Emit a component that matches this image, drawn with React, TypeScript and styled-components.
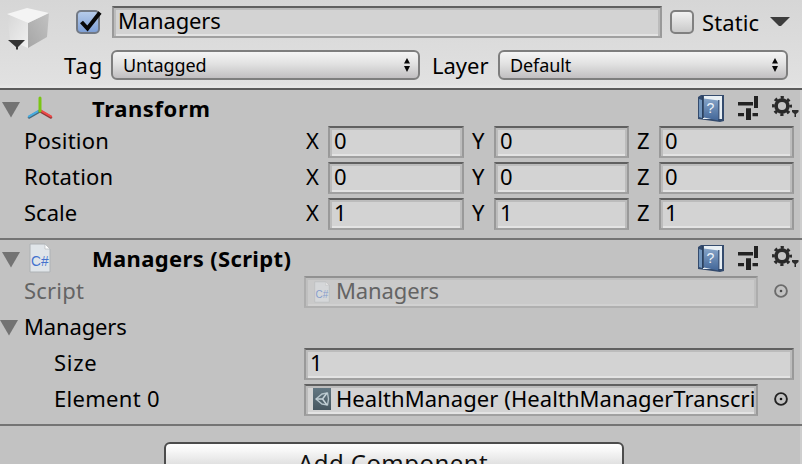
import React from 'react';
import styled, { createGlobalStyle } from 'styled-components';

const GlobalStyle = createGlobalStyle`
  *, *::before, *::after { box-sizing: border-box; }
  html, body { margin: 0; height: 464px; overflow: hidden; }
  svg { display: block; flex: none; }
`;

const Inspector = styled.div`
  width: 802px;
  height: 464px;
  overflow: hidden;
  background: #c2c2c2;
  box-shadow: inset -2px 0 #cecece;
  color: #000;
  font-family: 'Noto Sans', 'Open Sans', sans-serif;
  font-size: 22px;
  line-height: 30px;
  white-space: nowrap;
`;

const ObjectHeader = styled.header`
  display: flex;
  height: 90px;
  background: linear-gradient(#d6d6d6, #e1e1e1 84px, #e6e6e6 87px);
  border-bottom: 2px solid #5b5b5b;
`;

const CubeCell = styled.div`
  width: 64px;
  padding: 6px 0 0 5px;
`;

const HeaderLines = styled.div`
  flex: 1;
  min-width: 0;
`;

const NameLine = styled.div`
  display: flex;
  align-items: center;
  height: 32px;
  margin-top: 6px;
  padding-left: 12px;
`;

const PopupLine = styled.div`
  display: flex;
  height: 30px;
  margin-top: 12px;
`;

const Toggle = styled.span<{ $on?: boolean }>`
  flex: none;
  width: 24px;
  height: 24px;
  border: 2px solid ${(p) => (p.$on ? '#737a85' : '#808080')};
  border-radius: 5px;
  background: ${(p) => (p.$on ? 'linear-gradient(#b5cbea, #7fa0d6)' : 'linear-gradient(#f2f2f2, #c9c9c9)')};
  svg { margin: -2px 0 0 1px; overflow: visible; }
`;

const Text = styled.span<{ $w?: number; $ls?: number; $ml?: number; $dim?: boolean }>`
  flex: none;
  width: ${(p) => (p.$w ? `${p.$w}px` : 'auto')};
  height: 30px;
  margin-left: ${(p) => p.$ml ?? 0}px;
  letter-spacing: ${(p) => p.$ls ?? 0}px;
  color: ${(p) => (p.$dim ? '#646464' : '#000')};
`;

const Title = styled(Text).attrs({ as: 'h2' })`
  flex: 1;
  margin-top: 0;
  margin-bottom: 0;
  font-size: 22px;
  font-weight: 700;
`;

const Field = styled.div<{ $w: number; $ml?: number; $dim?: boolean }>`
  display: flex;
  flex: none;
  width: ${(p) => p.$w}px;
  height: 32px;
  margin-left: ${(p) => p.$ml ?? 0}px;
  padding: 0 2px 0 4px;
  overflow: hidden;
  border: 2px solid;
  border-color: ${(p) => (p.$dim ? '#919191 #adadad #b0b0b0' : '#606060 #999 #a0a0a0')};
  background: ${(p) => (p.$dim ? '#cacaca' : '#d3d3d3')};
  box-shadow: ${(p) =>
    p.$dim
      ? 'inset 2px 2px #bfbfbf, inset -2px 0 #bfbfbf, inset 0 -2px #d1d1d1'
      : 'inset 2px 2px #bcbcbc, inset -2px 0 #bcbcbc, inset 0 -2px #e3e3e3'};
  line-height: 25px;
`;

const Clip = styled.span`
  flex: 1;
  min-width: 0;
  overflow: hidden;
  letter-spacing: 0.07px;
`;

const Popup = styled.div<{ $w: number; $ml: number }>`
  display: flex;
  align-items: center;
  justify-content: space-between;
  flex: none;
  width: ${(p) => p.$w}px;
  height: 30px;
  margin-left: ${(p) => p.$ml}px;
  padding: 0 8px 0 10px;
  border: 2px solid #7e7e7e;
  border-radius: 6px;
  background: linear-gradient(#f5f5f5, #e2e2e2 45%, #c1bfc1);
  font-size: 18px;
  letter-spacing: -0.1px;
`;

const Component = styled.section<{ $h: number }>`
  height: ${(p) => p.$h}px;
  border-bottom: 2px solid #747474;
`;

const TitleRow = styled.div`
  display: flex;
  height: 36px;
  padding-right: 3px;
  padding-top: 3px;
`;

const Row = styled.div<{ $indent?: number }>`
  display: flex;
  height: 36px;
  padding-left: ${(p) => p.$indent ?? 24}px;
  line-height: 29px;
`;

const Slot = styled.span<{ $w: number; $t?: number; $l?: number }>`
  flex: none;
  width: ${(p) => p.$w}px;
  padding: ${(p) => p.$t ?? 0}px 0 0 ${(p) => p.$l ?? 0}px;
`;

const AddButton = styled.button`
  display: block;
  width: 460px;
  height: 46px;
  margin: 16px 0 0 164px;
  padding: 0;
  border: 2px solid #4c4c4c;
  border-radius: 6px;
  background: linear-gradient(#fff, #f8f8f8 6px, #d4d4d4 28px, #c4c4c4);
  color: #111;
  font: 24px/32px 'Noto Sans', 'Open Sans', sans-serif;
  letter-spacing: 0.45px;
  span { display: block; margin: -5px 2px 0 0; }
`;

const Foldout = () => (
  <svg width="18" height="16" viewBox="0 0 18 16"><path d="M0 0H18L9 15.5Z" fill="#737373" /></svg>
);

const DownMark = () => (
  <svg width="20" height="10" viewBox="0 0 20 10"><path d="M0 0H20L11 9H9Z" fill="#3d3d3d" /></svg>
);

const Arrows = () => (
  <svg width="6" height="14" viewBox="0 0 6 14"><path d="M3 0L6 5.6H0ZM0 8H6L3 14Z" fill="#080808" /></svg>
);

const CubeIcon = () => (
  <svg width="46" height="46" viewBox="0 0 46 46">
    <defs>
      <linearGradient id="cubeLeft" x1="0" y1="0" x2="1" y2="1">
        <stop stopColor="#d6d6d6" /><stop offset="1" stopColor="#f1f1f1" />
      </linearGradient>
      <linearGradient id="cubeRight" x1="1" y1="0" x2="0" y2="1">
        <stop stopColor="#c2c2c2" /><stop offset="1" stopColor="#a6a6a6" />
      </linearGradient>
    </defs>
    <path d="M2 8L23 17V42L5 34Z" fill="url(#cubeLeft)" />
    <path d="M44 7L23 17V42L42 31Z" fill="url(#cubeRight)" />
    <path d="M2 8L22 2L44 7L23 17Z" fill="#f4f4f4" />
    <path d="M3 34H20L13 41V43.5H11V41Z" fill="#333" />
  </svg>
);

const AxesIcon = () => (
  <svg width="28" height="26" viewBox="0 0 28 26" fill="none" strokeLinecap="round" strokeWidth="3">
    <path d="M14 16L3.2 22.2" stroke="#47697b" /><path d="M13.5 15.4L3 21.4" stroke="#46ace0" strokeWidth="2" />
    <path d="M14 16L24.8 22.2" stroke="#903838" /><path d="M14.5 15.4L25 21.4" stroke="#ef4949" strokeWidth="2" />
    <path d="M14 16V3" stroke="#7ac514" />
  </svg>
);

const ScriptIcon = ({ small }: { small?: boolean }) => (
  <svg width={small ? 16 : 22} height={small ? 22 : 30} viewBox="0 0 22 30" opacity={small ? 0.5 : 1}>
    <path d="M1 1H16L21 6V29H1Z" fill="#e0e5e9" stroke="#aeb2b5" strokeWidth="1" />
    <path d="M16 1V6H21Z" fill="#fff" stroke="#b5b9bc" strokeWidth=".7" />
    <text x="2" y="23.2" fontFamily="Liberation Sans, sans-serif" fontSize="14" textLength="17.5" lengthAdjust="spacingAndGlyphs" fill="#4472ce">C#</text>
  </svg>
);

const PrefabScriptIcon = () => (
  <svg width="18" height="22" viewBox="0 0 18 22">
    <defs>
      <linearGradient id="tile" x2="0" y2="1"><stop stopColor="#637782" /><stop offset="1" stopColor="#465660" /></linearGradient>
    </defs>
    <path d="M0 0H18V22H0Z" fill="url(#tile)" />
    <path d="M14.5 5L9 6L3 11L9 16L14.5 17L15.5 11Z" fill="none" stroke="#b4c3ca" strokeWidth="1.4" />
    <path d="M3 11H9.5L14 5M9.5 11L14 17" fill="none" stroke="#c6d3d9" strokeWidth="1.5" />
  </svg>
);

const BookIcon = () => (
  <svg width="26" height="29" viewBox="0 0 26 29">
    <defs>
      <linearGradient id="book" x2="0" y2="1"><stop stopColor="#86a4c8" /><stop offset="1" stopColor="#426698" /></linearGradient>
    </defs>
    <path d="M3 1H26V27L22 28L0 25V3Z" fill="#344b6d" />
    <path d="M5 2H24V25H5Z" fill="#e8eff4" />
    <path d="M1 5L4 6V24L1 23Z" fill="#7396bd" />
    <path d="M6 4.5L20.5 6.5V26.5L6 23.5Z" fill="url(#book)" />
    <path d="M20.8 6V27" stroke="#2d476e" strokeWidth="1.2" />
    <path d="M5 2V24" stroke="#29405f" strokeWidth="1.8" />
    <text x="12.5" y="19.3" textAnchor="middle" fontFamily="Liberation Sans, sans-serif" fontSize="14" fill="#f0f6fb">?</text>
  </svg>
);

const SlidersIcon = () => (
  <svg width="20" height="24" viewBox="0 0 20 24" fill="#222">
    <path d="M0 6H15V9.5H0ZM16 0H20V12H16ZM0 17H6V20.3H0ZM8 12.3H13V24H8ZM14.5 17H20V20.3H14.5Z" />
  </svg>
);

const GearIcon = () => (
  <svg width="27" height="24" viewBox="0 0 27 24">
    <circle cx="10" cy="10" r="5.9" fill="none" stroke="#292929" strokeWidth="3.6" />
    <circle cx="10" cy="10" r="8.6" fill="none" stroke="#292929" strokeWidth="2.8" strokeDasharray="3.2 3.554" strokeDashoffset="1.6" />
    <path d="M20 14H26.5V16L24 18V21H22.5V18L20 16Z" fill="#2d2d2d" />
  </svg>
);

const PickerIcon = ({ dim }: { dim?: boolean }) => (
  <svg width="14" height="14" viewBox="0 0 14 14">
    <circle cx="7" cy="7" r="5.9" fill="none" stroke={dim ? '#6b6b6b' : '#222'} strokeWidth="1.9" />
    <circle cx="7" cy="7" r="1.3" fill={dim ? '#4b4b4b' : '#111'} />
  </svg>
);

const TitleActions = () => (
  <>
    <Slot $w={40} $t={1}><BookIcon /></Slot>
    <Slot $w={34} $t={3}><SlidersIcon /></Slot>
    <Slot $w={27} $t={3}><GearIcon /></Slot>
  </>
);

const VectorRow = ({ label, value, ls }: { label: string; value: string; ls?: number }) => (
  <Row>
    <Text $w={282} $ls={ls}>{label}</Text>
    <Text $w={22}>X</Text>
    <Field $w={136}><Text>{value}</Text></Field>
    <Text $w={22} $ml={8}>Y</Text>
    <Field $w={135}><Text>{value}</Text></Field>
    <Text $w={22} $ml={8}>Z</Text>
    <Field $w={135}><Text>{value}</Text></Field>
  </Row>
);

export default function App() {
  return (
    <>
      <GlobalStyle />
      <Inspector>
        <ObjectHeader>
          <CubeCell><CubeIcon /></CubeCell>
          <HeaderLines>
            <NameLine>
              <Toggle $on>
                <svg width="22" height="24" viewBox="0 0 22 24"><path d="M2.5 12L8.5 18.5L21 2.5" fill="none" stroke="#080808" strokeWidth="4" /></svg>
              </Toggle>
              <Field $w={550} $ml={12}><Text $ls={-0.15}>Managers</Text></Field>
              <Slot $w={8} />
              <Toggle />
              <Text $w={68} $ml={8} $ls={0.1}>Static</Text>
              <Slot $w={20}><DownMark /></Slot>
            </NameLine>
            <PopupLine>
              <Text $w={39} $ls={1}>Tag</Text>
              <Popup $w={309} $ml={8}>Untagged<Arrows /></Popup>
              <Text $w={58} $ml={12}>Layer</Text>
              <Popup $w={290} $ml={8}>Default<Arrows /></Popup>
            </PopupLine>
          </HeaderLines>
        </ObjectHeader>

        <Component $h={150}>
          <TitleRow>
            <Slot $w={26} $t={9} $l={2}><Foldout /></Slot>
            <Slot $w={66} $t={2}><AxesIcon /></Slot>
            <Title $ls={0.6}>Transform</Title>
            <TitleActions />
          </TitleRow>
          <VectorRow label="Position" value="0" ls={0.2} />
          <VectorRow label="Rotation" value="0" ls={0.2} />
          <VectorRow label="Scale" value="1" />
        </Component>

        <Component $h={186}>
          <TitleRow>
            <Slot $w={29} $t={9} $l={2}><Foldout /></Slot>
            <Slot $w={63}><ScriptIcon /></Slot>
            <Title $ls={0.35}>Managers (Script)</Title>
            <TitleActions />
          </TitleRow>
          <Row>
            <Text $w={280} $dim $ls={0.2}>Script</Text>
            <Field $w={454} $dim>
              <Slot $w={26} $t={3} $l={4}><ScriptIcon small /></Slot>
              <Text $dim $ls={-0.1}>Managers</Text>
            </Field>
            <Slot $w={30} $t={8} $l={16}><PickerIcon dim /></Slot>
          </Row>
          <Row $indent={0}>
            <Slot $w={24} $t={8}><Foldout /></Slot>
            <Text $ls={-0.15}>Managers</Text>
          </Row>
          <Row $indent={54}>
            <Text $w={250} $ls={0.7}>Size</Text>
            <Field $w={490}><Text>1</Text></Field>
          </Row>
          <Row $indent={54}>
            <Text $w={250} $ls={0.3}>Element 0</Text>
            <Field $w={454}>
              <Slot $w={26} $t={2} $l={3}><PrefabScriptIcon /></Slot>
              <Clip>HealthManager (HealthManagerTranscript)</Clip>
            </Field>
            <Slot $w={30} $t={8} $l={16}><PickerIcon /></Slot>
          </Row>
        </Component>
        <AddButton><span>Add Component</span></AddButton>
      </Inspector>
    </>
  );
}
